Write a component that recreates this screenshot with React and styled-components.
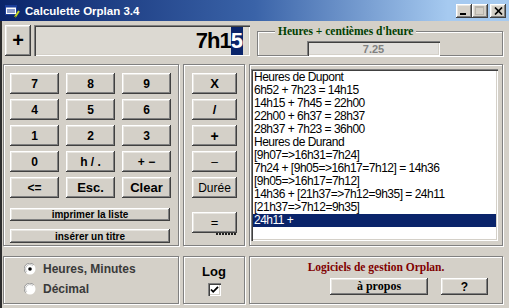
import React from "react";
import styled, { createGlobalStyle } from "styled-components";

const GlobalStyle = createGlobalStyle`
  body {
    margin: 0;
    background: #d4d0c8;
    font-family: "Liberation Sans", Arial, sans-serif;
  }
`;

const raised = `
  background: #d4d0c8;
  border: none;
  box-shadow: inset -1px -1px 0 #404040, inset 1px 1px 0 #ffffff,
    inset -2px -2px 0 #808080, inset 2px 2px 0 #e8e6e1;
`;

const sunken = `
  box-shadow: inset 1px 1px 0 #808080, inset 2px 2px 0 #404040,
    inset -1px -1px 0 #ffffff, inset -2px -2px 0 #d4d0c8;
`;

const Window = styled.div`
  width: 509px;
  height: 308px;
  background: #d4d0c8;
  overflow: hidden;
  display: flex;
  flex-direction: column;
`;

const TitleBar = styled.div`
  height: 21px;
  flex: none;
  display: flex;
  align-items: center;
  padding: 0 3px 0 4px;
  background: linear-gradient(to right, #0a246a 0%, #3a63a8 50%, #a6caf0 88%, #a6caf0 100%);
  color: #fff;
  font: bold 11.5px "Liberation Sans", Arial, sans-serif;
`;

const TitleText = styled.span`
  margin-left: 5px;
  flex: 1;
`;

const WinButtons = styled.div`
  display: flex;
  gap: 0;
`;

const WinButton = styled.div`
  ${raised}
  width: 16px;
  height: 14px;
  margin-left: ${p => (p.$gap ? "2px" : "0")};
  display: flex;
  align-items: center;
  justify-content: center;
`;

const Body = styled.div`
  flex: 1;
  border-left: 2px solid #2c2c2c;
  padding-left: 1px;
  display: flex;
  flex-direction: column;
`;

const TopRow = styled.div`
  height: 43px;
  flex: none;
  display: flex;
  align-items: flex-start;
  padding-top: 4px;
  box-sizing: border-box;
`;

const PlusBox = styled.div`
  ${raised}
  margin-left: 2px;
  width: 26px;
  height: 31px;
  display: flex;
  align-items: center;
  justify-content: center;
  font: bold 20px "Liberation Sans", Arial, sans-serif;
`;

const Display = styled.div`
  ${sunken}
  margin-left: 3px;
  width: 216px;
  height: 31px;
  box-sizing: border-box;
  background: #dcd9d2;
  display: flex;
  align-items: center;
  justify-content: flex-end;
  padding-right: 7px;
  font: bold 22px "Liberation Sans", Arial, sans-serif;
  letter-spacing: -1px;
  color: #000;
`;

const Selected = styled.span`
  background: #0a246a;
  color: #fff;
  letter-spacing: 0;
  padding: 1px 0;
`;

const Group = styled.fieldset`
  margin: 1px 0 0 7px;
  padding: 0;
  min-width: 0;
  width: 246px;
  height: 30px;
  box-sizing: border-box;
  border: 1px solid #808080;
  box-shadow: inset 1px 1px 0 #fff, 1px 1px 0 #fff;
`;

const Legend = styled.legend`
  margin-left: 17px;
  padding: 0 3px;
  background: #d4d0c8;
  color: #004000;
  font: bold 11.5px "Liberation Serif", "Times New Roman", serif;
  line-height: 11px;
`;

const ValueBox = styled.div`
  ${sunken}
  margin: 4px 0 0 49px;
  width: 133px;
  height: 15px;
  background: #e2e0dc;
  display: flex;
  align-items: center;
  justify-content: center;
  color: #808080;
  font: bold 11px "Liberation Sans", Arial, sans-serif;
`;

const PanelRow = styled.div`
  display: grid;
  grid-template-columns: 176px 62px 254px;
  column-gap: 4px;
  height: ${p => p.$h}px;
  margin-top: ${p => p.$mt || 0}px;
  flex: none;
`;

const Panel = styled.div`
  border: 1px solid #808080;
  box-shadow: inset 1px 1px 0 #fff, 1px 1px 0 #fff;
  box-sizing: border-box;
  padding: ${p => p.$pad};
  display: flex;
  flex-direction: column;
  align-items: ${p => p.$align || "stretch"};
`;

const KeyGrid = styled.div`
  display: grid;
  grid-template-columns: repeat(3, 49px);
  grid-auto-rows: 21px;
  column-gap: 7px;
  row-gap: 5px;
`;

const Button = styled.button`
  ${raised}
  padding: 0;
  margin: 0;
  color: #000;
  font: ${p => (p.$light ? "normal" : "bold")} ${p => p.$size || 12}px
    ${p => (p.$serif ? `"Liberation Serif", "Times New Roman", serif` : `"Liberation Sans", Arial, sans-serif`)};
  width: ${p => (p.$w ? `${p.$w}px` : "auto")};
  height: ${p => (p.$h ? `${p.$h}px` : "auto")};
  margin-top: ${p => p.$mt || 0}px;
  display: flex;
  align-items: center;
  justify-content: center;
`;

const OpColumn = styled.div`
  display: flex;
  flex-direction: column;
  gap: 5px;
`;

const FocusMark = styled.div`
  align-self: flex-end;
  width: 20px;
  height: 2px;
  margin: 0 8px 0 0;
  background: repeating-linear-gradient(to right, #202020 0 2px, transparent 2px 3px);
`;

const ListBox = styled.div`
  ${sunken}
  flex: 1;
  background: #fff;
  padding: 2px 2px;
  overflow: hidden;
`;

const Line = styled.div`
  height: 13px;
  line-height: 13px;
  padding-left: 1px;
  font-size: 12px;
  letter-spacing: -0.5px;
  white-space: nowrap;
  color: ${p => (p.$sel ? "#fff" : "#000")};
  background: ${p => (p.$sel ? "#0a246a" : "transparent")};
`;

const RadioRow = styled.div`
  display: flex;
  align-items: center;
  height: 20px;
  padding-left: 20px;
  font: bold 12px "Liberation Sans", Arial, sans-serif;
  color: #3a3a3a;
`;

const RadioLabel = styled.span`
  margin-left: 7px;
`;

const LogLabel = styled.div`
  margin-top: 7px;
  font: bold 13px "Liberation Sans", Arial, sans-serif;
  color: #000;
`;

const CheckWrap = styled.div`
  margin-top: 4px;
  width: 13px;
  height: 13px;
  background: #fff;
  ${sunken}
  display: flex;
  align-items: center;
  justify-content: center;
`;

const Brand = styled.div`
  margin-top: 4px;
  text-align: center;
  color: #800000;
  font: bold 11.5px "Liberation Serif", "Times New Roman", serif;
`;

const BrandButtons = styled.div`
  display: flex;
  gap: 13px;
  padding-left: 80px;
  margin-top: 5px;
`;

const TitleIcon = () => (
  <svg width="16" height="14" viewBox="0 0 16 14">
    <rect x="1.5" y="1.5" width="11" height="9" fill="#fff" stroke="#1a3d9a" />
    <rect x="1.5" y="1.5" width="11" height="2" fill="#1a3d9a" />
    <path d="M3 6h8M3 8h8" stroke="#1a3d9a" />
    <path d="M11 13l4-6" stroke="#c8d820" strokeWidth="2" />
    <path d="M10.5 13.5l1-1" stroke="#203000" />
  </svg>
);

const Radio = ({ checked }) => (
  <svg width="12" height="12" viewBox="0 0 12 12">
    <circle cx="6" cy="6" r="5.5" fill="#fff" />
    <path d="M1.8 9.8A5.2 5.2 0 0 1 9.8 1.8" stroke="#9a9a9a" fill="none" />
    <path d="M2.8 8.8A4 4 0 0 1 8.8 2.8" stroke="#c0c0c0" fill="none" />
    {checked && <circle cx="6" cy="6" r="1.8" fill="#000" />}
  </svg>
);

const keys = ["7", "8", "9", "4", "5", "6", "1", "2", "3", "0", "h / .", "+ −", "<=", "Esc.", "Clear"];

const lines = [
  "Heures de Dupont",
  "6h52 + 7h23 = 14h15",
  "14h15 + 7h45 = 22h00",
  "22h00 + 6h37 = 28h37",
  "28h37 + 7h23 = 36h00",
  "Heures de Durand",
  "[9h07=>16h31=7h24]",
  "7h24 + [9h05=>16h17=7h12] = 14h36",
  "[9h05=>16h17=7h12]",
  "14h36 + [21h37=>7h12=9h35] = 24h11",
  "[21h37=>7h12=9h35]",
  "24h11 +"
];

export default function App() {
  return (
    <>
      <GlobalStyle />
      <Window>
        <TitleBar>
          <TitleIcon />
          <TitleText>Calculette Orplan 3.4</TitleText>
          <WinButtons>
            <WinButton>
              <svg width="8" height="8" viewBox="0 0 8 8">
                <rect x="0" y="6" width="6" height="2" fill="#000" />
              </svg>
            </WinButton>
            <WinButton>
              <svg width="10" height="9" viewBox="0 0 10 9">
                <rect x="0.5" y="0.5" width="8" height="8" fill="none" stroke="#b8b4ac" />
                <rect x="0" y="0" width="9" height="2" fill="#b8b4ac" />
              </svg>
            </WinButton>
            <WinButton $gap>
              <svg width="9" height="8" viewBox="0 0 9 8">
                <path d="M1 0.5l7 7M8 0.5l-7 7" stroke="#000" strokeWidth="1.7" />
              </svg>
            </WinButton>
          </WinButtons>
        </TitleBar>
        <Body>
          <TopRow>
            <PlusBox>+</PlusBox>
            <Display>
              7h1<Selected>5</Selected>
            </Display>
            <Group>
              <Legend>Heures + centièmes d'heure</Legend>
              <ValueBox>7.25</ValueBox>
            </Group>
          </TopRow>

          <PanelRow $h={182}>
            <Panel $pad="8px 0 0 6px">
              <KeyGrid>
                {keys.map(k => (
                  <Button key={k} $size={k === "Clear" || k === "Esc." ? 13 : 12}>
                    {k}
                  </Button>
                ))}
              </KeyGrid>
              <Button $w={160} $h={13} $mt={10} $size={10}>
                imprimer la liste
              </Button>
              <Button $w={160} $h={14} $mt={8} $size={10}>
                insérer un titre
              </Button>
            </Panel>
            <Panel $pad="8px 0 0 8px">
              <OpColumn>
                <Button $w={45} $h={21} $size={13}>X</Button>
                <Button $w={45} $h={21} $size={13}>/</Button>
                <Button $w={45} $h={21} $size={14}>+</Button>
                <Button $w={45} $h={21} $light>–</Button>
                <Button $w={45} $h={21} $light>Durée</Button>
              </OpColumn>
              <Button $w={45} $h={21} $mt={14} $light $size={13}>=</Button>
              <FocusMark />
            </Panel>
            <Panel $pad="4px 4px 4px 1px">
              <ListBox>
                {lines.map((l, i) => (
                  <Line key={i} $sel={i === lines.length - 1}>
                    {l}
                  </Line>
                ))}
              </ListBox>
            </Panel>
          </PanelRow>

          <PanelRow $h={48} $mt={10}>
            <Panel $pad="2px 0 0 0">
              <RadioRow>
                <Radio checked />
                <RadioLabel>Heures, Minutes</RadioLabel>
              </RadioRow>
              <RadioRow>
                <Radio />
                <RadioLabel>Décimal</RadioLabel>
              </RadioRow>
            </Panel>
            <Panel $pad="0" $align="center">
              <LogLabel>Log</LogLabel>
              <CheckWrap>
                <svg width="9" height="9" viewBox="0 0 9 9">
                  <path d="M1 4.5l2.2 2.3L8 1.8" stroke="#000" strokeWidth="1.8" fill="none" />
                </svg>
              </CheckWrap>
            </Panel>
            <Panel $pad="0">
              <Brand>Logiciels de gestion Orplan.</Brand>
              <BrandButtons>
                <Button $w={98} $h={17} $serif $size={12}>à propos</Button>
                <Button $w={47} $h={17} $size={12}>?</Button>
              </BrandButtons>
            </Panel>
          </PanelRow>
        </Body>
      </Window>
    </>
  );
}
